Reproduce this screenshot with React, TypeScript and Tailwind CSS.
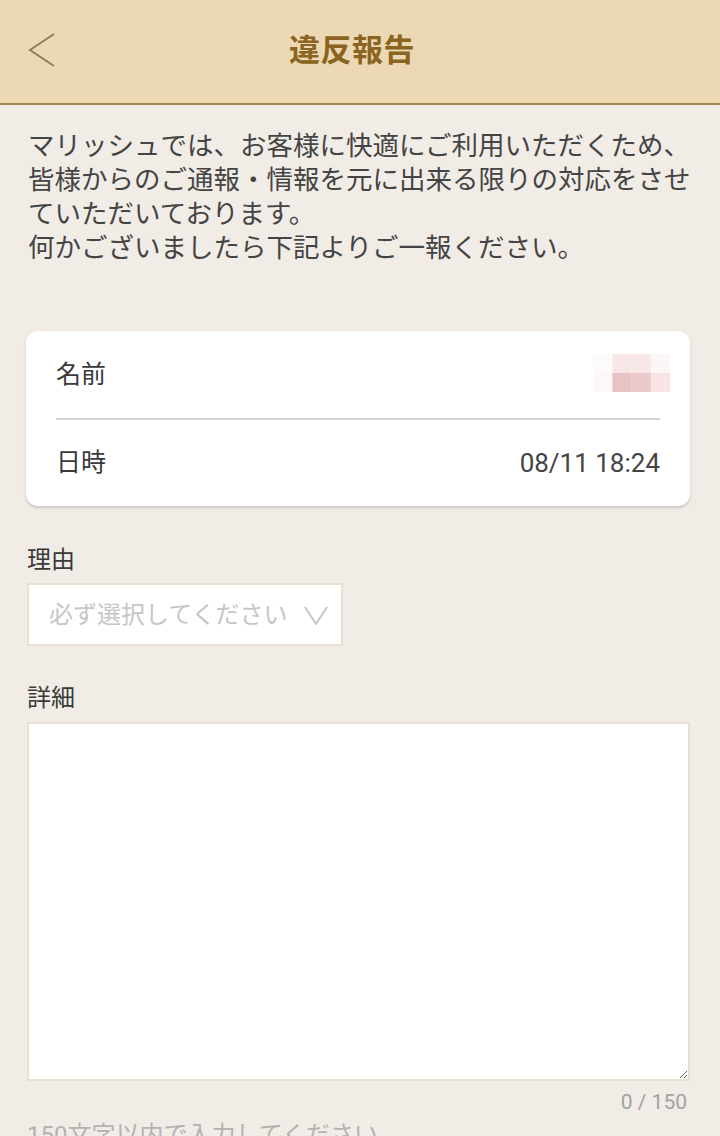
import React from 'react';

const font = { fontFamily: "Roboto, 'Noto Sans CJK JP', 'Noto Sans', sans-serif" };

function BlurredName() {
  // pixelated (mosaic) name value
  const cells = [
    ['#fdfafa', '#f8e7e7', '#f8e7e7', '#fdf6f6'],
    ['#fdf8f8', '#e8c3c4', '#ebc9ca', '#f8e4e5'],
  ];
  return (
    <svg width="77" height="38" viewBox="0 0 77 38">
      {cells.map((row, r) =>
        row.map((c, i) => <rect key={`${r}-${i}`} x={i * 19.3} y={r * 19} width="19.4" height="19" fill={c} />)
      )}
    </svg>
  );
}

export default function App() {
  return (
    <div className="min-h-[1136px] w-[720px] overflow-hidden bg-[#f1ece6] text-[#3a3a3a]" style={font}>
      <header className="relative flex h-[105px] items-center justify-center border-b-2 border-[#a3864f] bg-[#ecd9b4]">
        <button className="absolute left-[28px] top-[33px]">
          <svg width="28" height="34" viewBox="0 0 28 34" fill="none">
            <polyline points="26,1 2,17 26,33" stroke="#8f7c58" strokeWidth="2" />
          </svg>
        </button>
        <h1 className="pr-[16px] text-[31px] font-bold tracking-[0.5px] text-[#8a6420]">違反報告</h1>
      </header>

      <main className="pl-[26px] pr-[30px]">
        <p className="ml-[2px] mt-[24px] whitespace-nowrap text-[26.5px] leading-[34px] text-[#444]">
          マリッシュでは、お客様に快適にご利用いただくため、
          <br />
          皆様からのご通報・情報を元に出来る限りの対応をさせ
          <br />
          ていただいております。
          <br />
          何かございましたら下記よりご一報ください。
        </p>

        <div className="mt-[66px] rounded-[12px] bg-white px-[30px] shadow-[0_2px_3px_rgba(0,0,0,0.16)]">
          <div className="flex h-[87px] items-center justify-between">
            <span className="text-[25px]">名前</span>
            <span className="mr-[-10px] mt-[-4px]">
              <BlurredName />
            </span>
          </div>
          <div className="h-[2px] bg-[#d2d2d2]" />
          <div className="flex h-[86px] items-center justify-between">
            <span className="text-[25px]">日時</span>
            <span className="text-[26px] text-[#444]">08/11 18:24</span>
          </div>
        </div>

        <div className="ml-[1px] mt-[39px] text-[24px] leading-[30px]">理由</div>
        <div className="ml-[1px] mt-[8px] flex h-[63px] w-[316px] items-center justify-between border-2 border-[#ebe0d0] bg-white pl-[20px] pr-[13px]">
          <span className="text-[24px] text-[#c6c6c6]">必ず選択してください</span>
          <svg width="24" height="20" viewBox="0 0 24 20" fill="none">
            <polyline points="1,2 12,19 23,2" stroke="#c2c2c2" strokeWidth="1.8" />
          </svg>
        </div>

        <div className="ml-[1px] mt-[37px] text-[24px] leading-[30px]">詳細</div>
        <textarea className="ml-[1px] mt-[9px] block h-[359px] w-[663px] border-2 border-[#ebe0d0] bg-white p-[10px] text-[24px] outline-none" />

        <div className="mt-[9px] pr-[3px] text-right text-[21px] leading-[24px] text-[#a3a3a3]">0 / 150</div>
        <div className="ml-[1px] mt-[6px] text-[24px] leading-[30px] text-[#b3b3b3]">150文字以内で入力してください</div>
      </main>
    </div>
  );
}
